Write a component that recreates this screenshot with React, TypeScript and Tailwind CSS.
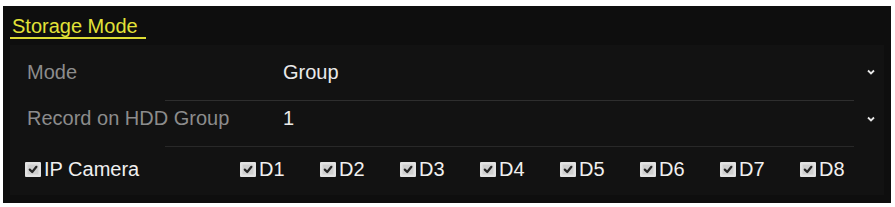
import React from 'react';

const channels = ['D1', 'D2', 'D3', 'D4', 'D5', 'D6', 'D7', 'D8'];

const CheckBox: React.FC = () => (
  <svg width="16" height="15" viewBox="0 0 16 15" className="shrink-0">
    <rect x="0" y="0" width="16" height="15" rx="1" fill="#e2e2e2" />
    <rect x="2.5" y="2.5" width="11" height="10" fill="#cfcfcf" />
    <path d="M4.8 7.6 L7.2 10 L11.4 4.8" stroke="#262626" strokeWidth="2.2" fill="none" strokeLinecap="round" strokeLinejoin="round" />
  </svg>
);

const Arrow: React.FC = () => (
  <svg width="8" height="6" viewBox="0 0 8 6" className="shrink-0">
    <path d="M1 1.5 L4 4.5 L7 1.5" stroke="#e6e6e6" strokeWidth="1.8" fill="none" />
  </svg>
);

const Check: React.FC<{ label: string; className?: string }> = ({ label, className }) => (
  <div className={`flex items-center gap-[3px] ${className ?? ''}`}>
    <CheckBox />
    <span className="text-[#f0f0f0]">{label}</span>
  </div>
);

export default function App() {
  return (
    <div
      className="w-[895px] h-[207px] bg-white pt-[6px] pl-[3px] pr-[4px] pb-[4px] text-[20px] leading-[23px]"
      style={{ fontFamily: '"Liberation Sans", Arial, sans-serif' }}
    >
      <div className="h-full bg-[#0e0e0e] flex flex-col">
        <div className="pl-[7px] pt-[10px]">
          <div className="w-[136px] h-[23px] border-b-2 border-[#dcdc34] pl-[2px] text-[#e2e238] leading-[21px]">
            Storage Mode
          </div>
        </div>

        <div className="mt-[6px] mx-[7px] bg-[#121212] flex flex-col">
          <div className="h-[56px] flex flex-col">
            <div className="h-[46px] mt-[4px] flex items-center pl-[17px] pr-[9px]">
              <span className="w-[256px] text-[#8c8c8c]">Mode</span>
              <span className="flex-1 text-[#eaeaea]">Group</span>
              <Arrow />
            </div>
            <div className="mt-auto ml-[155px] mr-[30px] h-px bg-[#2e2e2e]" />
          </div>

          <div className="h-[46px] flex flex-col">
            <div className="h-[35px] flex items-center pl-[17px] pr-[9px]">
              <span className="w-[256px] text-[#8c8c8c]">Record on HDD Group</span>
              <span className="flex-1 text-[#eaeaea]">1</span>
              <Arrow />
            </div>
            <div className="mt-auto ml-[155px] mr-[30px] h-px bg-[#282828]" />
          </div>

          <div className="h-[48px] flex items-start pl-[15px]">
            <div className="h-[50px] -mt-[3px] flex items-center">
              <Check label="IP Camera" className="w-[215px]" />
              {channels.map((c) => (
                <Check key={c} label={c} className="w-[80px]" />
              ))}
            </div>
          </div>
        </div>
      </div>
    </div>
  );
}
